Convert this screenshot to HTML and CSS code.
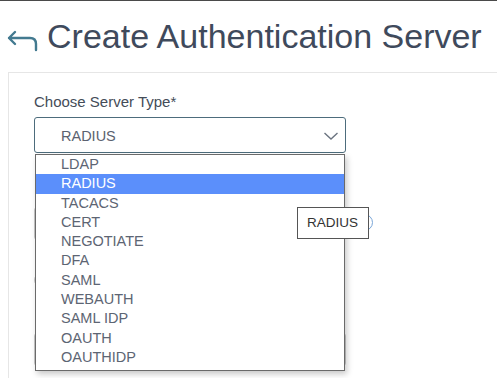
FILE: index.html
```html
<!DOCTYPE html>
<html>
<head>
<meta charset="utf-8">
<link rel="stylesheet" href="styles.css">
</head>
<body>
<div class="topline"></div>
<header class="header">
  <svg class="back" width="32" height="26" viewBox="0 0 32 26"><path d="M8 3 L2 9 L8 15 M2 9 H23 Q29 9 29 15 V21" fill="none" stroke="#437a90" stroke-width="2.4" stroke-linecap="round" stroke-linejoin="round"/></svg>
  <h1 class="title">Create Authentication Server</h1>
</header>
<main class="panel">
  <label class="label">Choose Server Type*</label>
  <div class="select-wrap">
    <div class="select">
      <span class="select-value">RADIUS</span>
      <svg class="chev" width="16" height="10" viewBox="0 0 16 10"><path d="M1.5 2 L8 8 L14.5 2" fill="none" stroke="#6b7480" stroke-width="1.4"/></svg>
    </div>
    <div class="behind">
      <div class="row row-input"><div class="fake-input"></div><span class="help"></span></div>
      <div class="row row-radio"><span class="radio"></span></div>
      <div class="row row-input2"><div class="fake-input"></div></div>
    </div>
    <ul class="list">
      <li>LDAP</li>
      <li class="sel">RADIUS</li>
      <li>TACACS</li>
      <li>CERT</li>
      <li>NEGOTIATE</li>
      <li>DFA</li>
      <li>SAML</li>
      <li>WEBAUTH</li>
      <li>SAML IDP</li>
      <li>OAUTH</li>
      <li>OAUTHIDP</li>
    </ul>
    <div class="tooltip">RADIUS</div>
  </div>
</main>
</body>
</html>
```
FILE: styles.css
```css
html, body {
  margin: 0;
  padding: 0;
  background: #fff;
  font-family: "Liberation Sans", Arial, sans-serif;
  overflow: hidden;
}
.topline {
  height: 1px;
  background: #4a4a4a;
}
.header {
  display: flex;
  align-items: center;
  height: 70px;
  padding-left: 7px;
  box-sizing: border-box;
}
.back {
  flex-shrink: 0;
  margin-top: 12px;
  margin-right: 8px;
}
.title {
  margin: 0;
  font-weight: 400;
  font-size: 34px;
  color: #3f4a5c;
  white-space: nowrap;
}
.panel {
  margin-left: 8px;
  margin-top: 1px;
  border-top: 1px solid #e6e6e6;
  border-left: 1px solid #e6e6e6;
  padding: 20px 0 0 25px;
  height: 400px;
}
.label {
  display: block;
  font-size: 15px;
  color: #444c58;
  line-height: 18px;
  margin-bottom: 6px;
}
.select-wrap {
  position: relative;
  width: 312px;
}
.select {
  height: 36px;
  border: 1px solid #4d6c7c;
  border-radius: 3px;
  box-sizing: border-box;
  display: flex;
  align-items: center;
  padding: 0 0 0 26px;
  background: #fff;
}
.select-value {
  flex: 1;
  font-size: 14.5px;
  color: #5b6270;
  padding-top: 2px;
}
.chev {
  margin-right: 6px;
  margin-top: 2px;
}
.behind {
  display: flex;
  flex-direction: column;
}
.fake-input {
  height: 33px;
  width: 312px;
  border: 1px solid #c8c8c8;
  border-radius: 3px;
  box-sizing: border-box;
}
.row-input {
  margin-top: 54px;
  position: relative;
}
.help {
  position: absolute;
  left: 322px;
  top: 7px;
  width: 15px;
  height: 15px;
  border: 1.5px solid #7aa6d8;
  border-radius: 50%;
}
.row-radio {
  margin-top: 33px;
  height: 12px;
}
.radio {
  display: block;
  width: 12px;
  height: 12px;
  border: 1px solid #c8c8c8;
  border-radius: 50%;
}
.row-input2 {
  margin-top: 48px;
}
.list {
  position: absolute;
  left: 1px;
  top: 37px;
  width: 310px;
  box-sizing: border-box;
  margin: 0;
  padding: 0 0 3px 0;
  list-style: none;
  background: #fff;
  border: 1px solid #6a6a6a;
  box-shadow: 2px 3px 6px rgba(0,0,0,0.22);
}
.list li {
  height: 19.3px;
  line-height: 19px;
  padding-left: 25px;
  font-size: 14.5px;
  color: #5d6573;
}
.list li.sel {
  background: #5b8ffb;
  color: #fff;
}
.tooltip {
  position: absolute;
  left: 263px;
  top: 90px;
  height: 32px;
  width: 72px;
  box-sizing: border-box;
  border: 1px solid #555;
  background: #fff;
  font-size: 13.5px;
  color: #333;
  padding-left: 9px;
  line-height: 30px;
}
```
